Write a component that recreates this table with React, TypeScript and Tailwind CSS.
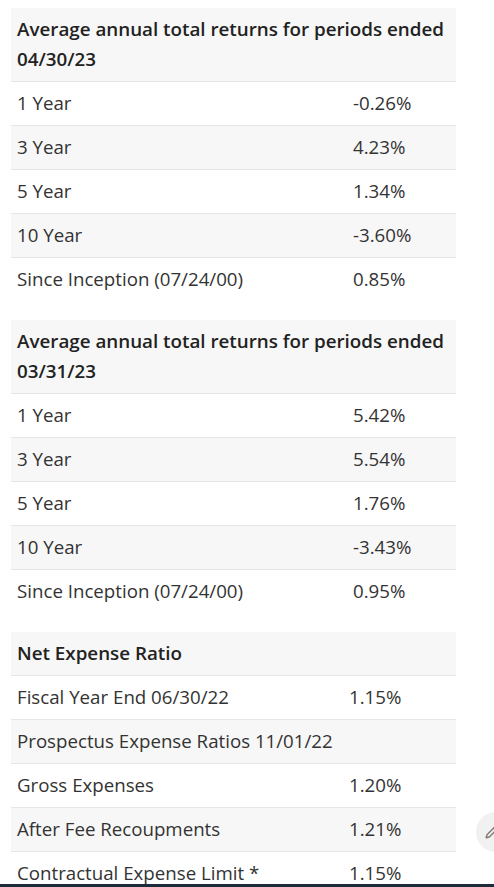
import { Pencil } from "lucide-react";

type Row = { label: string; value?: string };

const tables: { title: string[]; rows: Row[]; labelW: string }[] = [
  {
    title: ["Average annual total returns for periods ended", "04/30/23"],
    labelW: "w-[336px]",
    rows: [
      { label: "1 Year", value: "-0.26%" },
      { label: "3 Year", value: "4.23%" },
      { label: "5 Year", value: "1.34%" },
      { label: "10 Year", value: "-3.60%" },
      { label: "Since Inception (07/24/00)", value: "0.85%" },
    ],
  },
  {
    title: ["Average annual total returns for periods ended", "03/31/23"],
    labelW: "w-[336px]",
    rows: [
      { label: "1 Year", value: "5.42%" },
      { label: "3 Year", value: "5.54%" },
      { label: "5 Year", value: "1.76%" },
      { label: "10 Year", value: "-3.43%" },
      { label: "Since Inception (07/24/00)", value: "0.95%" },
    ],
  },
  {
    title: ["Net Expense Ratio"],
    labelW: "w-[332px]",
    rows: [
      { label: "Fiscal Year End 06/30/22", value: "1.15%" },
      { label: "Prospectus Expense Ratios 11/01/22" },
      { label: "Gross Expenses", value: "1.20%" },
      { label: "After Fee Recoupments", value: "1.21%" },
      { label: "Contractual Expense Limit *", value: "1.15%" },
    ],
  },
];

const ReturnsTable = ({ title, rows, labelW }: (typeof tables)[number]) => (
  <div className="w-[445px]">
    <div className="bg-[#f7f7f7] px-[6px] pt-[6px] pb-[7px] font-semibold text-[18.8px] leading-[30px] text-[#222]">
      {title.map((t) => (
        <div key={t}>{t}</div>
      ))}
    </div>
    {rows.map((r, i) => (
      <div
        key={r.label}
        className={`flex h-[44px] items-center border-t border-[#e6e6e6] px-[6px] text-[18.7px] text-[#333] ${
          i % 2 === 1 ? "bg-[#f7f7f7]" : "bg-white"
        }`}
      >
        <div className={`${labelW} shrink-0`}>{r.label}</div>
        <div>{r.value}</div>
      </div>
    ))}
  </div>
);

const App = () => {
  return (
    <div className="relative h-[887px] w-[494px] overflow-hidden bg-white font-['Open_Sans',sans-serif]">
      <div className="flex flex-col gap-[19px] pl-[11px] pt-[8px]">
        {tables.map((t, i) => (
          <ReturnsTable key={i} {...t} />
        ))}
      </div>
      <div className="absolute left-[476px] top-[812px] flex h-[40px] w-[40px] items-center justify-center rounded-full bg-[#f1f1f1]">
        <Pencil className="mr-[8px] h-[14px] w-[14px] text-[#8a7a72]" strokeWidth={2.5} />
      </div>
      <div className="absolute bottom-0 left-0 h-[3px] w-full bg-[#1d2b3c]" />
    </div>
  );
};

export default App;
